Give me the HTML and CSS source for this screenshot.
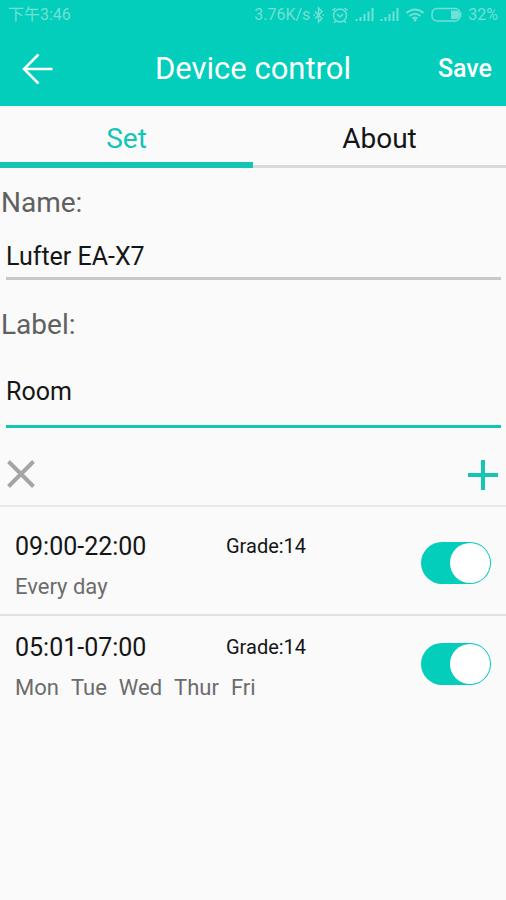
FILE: index.html
```html
<!DOCTYPE html>
<html lang="en">
<head>
<meta charset="utf-8">
<meta name="viewport" content="width=device-width, initial-scale=1">
<title>Device control</title>
<link rel="stylesheet" href="styles.css">
</head>
<body>
<header class="header">
  <div class="status">
    <span lang="zh">下午3:46</span>
    <div class="status-right">
      <span>3.76K/s</span>
      <svg class="bluetooth" width="12" height="18" viewBox="0 0 12 18"><path d="M2 5.500l7 7-3.500 3.500V2L9 5.500l-7 7M0.500 9h1.500M9.500 9h1.500"/></svg>
      <svg class="alarm" width="18" height="18" viewBox="0 0 18 18"><circle cx="9" cy="9.500" r="6.500"/><path d="M6 8l3 3 3-3M1.500 4.500L4.500 2M16.500 4.500L13.500 2M4.500 15L3 17M13.500 15l1.500 2"/></svg>
      <svg class="signal" width="19" height="16" viewBox="0 0 19 16"><path d="M1.500 12v2M5.500 10v4M9.500 7v7M13.500 4.500V14M17.500 1v13"/></svg>
      <svg class="signal" width="19" height="16" viewBox="0 0 19 16"><path d="M1.500 12v2M5.500 10v4M9.500 7v7M13.500 4.500V14M17.500 1v13"/></svg>
      <svg class="wifi" width="20" height="16" viewBox="0 0 20 16"><path d="M1.500 6Q10-1 18.500 6M4.500 9Q10 4.500 15.500 9M7.500 11.500Q10 9.500 12.500 11.500"/><circle class="solid" cx="10" cy="13" r="1.500"/></svg>
      <svg class="battery" width="31" height="16" viewBox="0 0 31 16"><rect x="1" y="1.500" width="28" height="12.500" rx="5"/><path class="solid" d="M20 3.500h5q3 0 3 3V9q0 3-3 3h-5zM29 5.500h1.500v4.500H29z"/></svg>
      <span>32%</span>
    </div>
  </div>
  <div class="titlebar">
    <button class="back" type="button" aria-label="Back">
      <svg width="32" height="32" viewBox="0 0 32 32"><path d="M30.500 16H2M16.500 1.500L2 16l14.500 14.500"/></svg>
    </button>
    <h1 class="title">Device control</h1>
    <button class="save" type="button">Save</button>
  </div>
</header>
<nav class="tabs">
  <a class="tab active" href="#set" aria-current="page">Set</a>
  <a class="tab" href="#about">About</a>
</nav>
<main id="set">
  <form class="fields">
    <label class="field-label" for="name">Name:</label>
    <input class="field" id="name" type="text" value="Lufter EA-X7">
    <label class="field-label" for="label">Label:</label>
    <input class="field current" id="label" type="text" value="Room">
  </form>
  <div class="actions">
    <button class="remove" type="button" aria-label="Remove">
      <svg width="30" height="30" viewBox="0 0 30 30"><path d="M2.500 1.500l25 25M27.500 1.500l-25 25"/></svg>
    </button>
    <button class="add" type="button" aria-label="Add">
      <svg width="30" height="30" viewBox="0 0 30 30"><path d="M15 0v30M0 15h30"/></svg>
    </button>
  </div>
  <ul class="schedules">
    <li class="schedule">
      <label class="time" for="on1">09:00-22:00</label>
      <span class="grade">Grade:14</span>
      <span class="days">Every day</span>
      <input class="switch" id="on1" type="checkbox" role="switch" checked>
    </li>
    <li class="schedule">
      <label class="time" for="on2">05:01-07:00</label>
      <span class="grade">Grade:14</span>
      <span class="days"><span>Mon</span><span>Tue</span><span>Wed</span><span>Thur</span><span>Fri</span></span>
      <input class="switch" id="on2" type="checkbox" role="switch" checked>
    </li>
  </ul>
</main>
</body>
</html>
```
FILE: styles.css
```css
:root {
  --teal: #03cdbb;
  --accent: #14c4b5;
  --faint: #70e1d7;
}

* {
  box-sizing: border-box;
}

body {
  margin: 0;
  background: #fafafa;
  color: #151515;
  font-family: Roboto, "Noto Sans CJK SC", sans-serif;
}

button {
  padding: 0;
  border: 0;
  background: none;
  color: inherit;
  font: inherit;
  cursor: pointer;
}

svg {
  display: block;
  fill: none;
  stroke: currentColor;
}

.solid {
  fill: currentColor;
  stroke: none;
}

/* Header */
.header {
  background: var(--teal);
  color: #fff;
}

.status {
  display: flex;
  justify-content: space-between;
  align-items: center;
  height: 30px;
  padding: 0 8px;
  color: var(--faint);
  font-size: 16px;
  line-height: 20px;
}

.status-right {
  display: flex;
  align-items: center;
  gap: 6px;
}

.bluetooth {
  margin-left: -3px;
  stroke-width: 1.5;
}

.alarm,
.battery {
  stroke-width: 1.5;
}

.signal,
.wifi {
  stroke-width: 2;
}

.titlebar {
  display: grid;
  grid-template-columns: 1fr auto 1fr;
  align-items: center;
  height: 76px;
  padding: 2px 14px 0;
}

.back {
  justify-self: start;
  padding: 0 8px;
  stroke-width: 2.5;
}

.title {
  margin: 0;
  font-size: 31px;
  font-weight: 400;
  line-height: 36px;
}

.save {
  justify-self: end;
  font-size: 25px;
  font-weight: 500;
  line-height: 36px;
}

/* Tabs */
.tabs {
  display: flex;
}

.tab {
  flex: 1;
  height: 62px;
  padding-top: 16px;
  border-bottom: 3px solid #dadada;
  color: inherit;
  font-size: 28px;
  line-height: 34px;
  text-align: center;
  text-decoration: none;
}

.tab.active {
  border-bottom: 6px solid var(--accent);
  color: var(--accent);
}

/* Form */
.fields {
  display: flex;
  flex-direction: column;
  padding-top: 18px;
}

.field-label {
  padding-left: 1px;
  color: #606060;
  font-size: 28px;
  line-height: 34px;
}

.field {
  height: 60px;
  margin: 0 5px 28px 6px;
  padding: 16px 0 0;
  border: 0;
  border-bottom: 3px solid #c8c8c8;
  border-radius: 0;
  outline: 0;
  background: none;
  color: inherit;
  font: inherit;
  font-size: 25px;
}

.field.current {
  height: 86px;
  margin-bottom: 0;
  border-color: var(--accent);
}

.actions {
  display: flex;
  justify-content: space-between;
  align-items: center;
  height: 79px;
  padding: 16px 8px 0 6px;
  border-bottom: 2px solid #e8e8e8;
}

.actions svg {
  stroke-width: 4;
}

.remove {
  color: #a5a5a5;
}

.add {
  color: var(--accent);
}

/* Schedules */
.schedules {
  margin: 0;
  padding: 8px 0 0;
  list-style: none;
}

.schedule {
  display: grid;
  grid-template-columns: 5fr 5fr auto;
  grid-template-rows: 40px 40px;
  align-items: center;
  padding: 11px 15px 8px;
}

.schedule + .schedule {
  border-top: 2px solid #e0e0e0;
}

.time {
  grid-area: 1 / 1;
  font-size: 25px;
}

.grade {
  grid-area: 1 / 2;
  padding-left: 8px;
  font-size: 20px;
}

.days {
  display: flex;
  grid-area: 2 / 1 / 3 / 3;
  gap: 12px;
  color: #6c6c6c;
  font-size: 22px;
}

.switch {
  display: grid;
  grid-area: 1 / 3 / 3 / 4;
  width: 70px;
  height: 42px;
  margin: 0 0 6px;
  padding: 1px;
  border-radius: 21px;
  appearance: none;
  background: #ccc;
  cursor: pointer;
}

.switch::before {
  width: 40px;
  height: 40px;
  border-radius: 50%;
  background: #fff;
  content: "";
}

.switch:checked {
  background: var(--teal);
}

.switch:checked::before {
  justify-self: end;
}
```
